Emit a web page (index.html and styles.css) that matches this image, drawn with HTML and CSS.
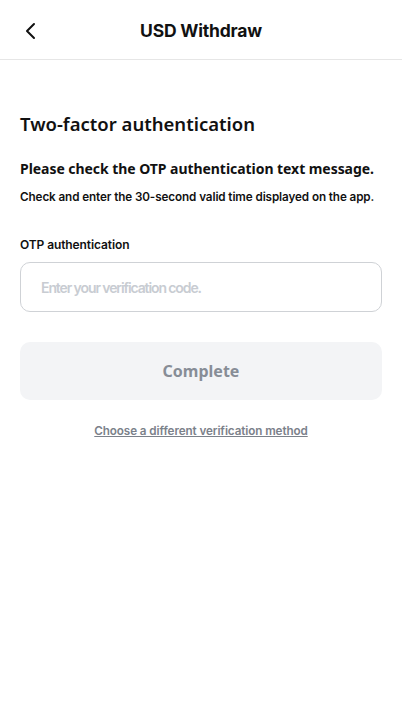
FILE: index.html
```html
<!DOCTYPE html>
<html lang="en">
<head>
<meta charset="utf-8">
<title>USD Withdraw</title>
<link rel="stylesheet" href="styles.css">
</head>
<body>
<header class="topbar">
  <button class="back" aria-label="Back">
    <svg width="14" height="18" viewBox="0 0 14 18"><path d="M10 2 L3 9 L10 16" fill="none" stroke="#111" stroke-width="2" stroke-linecap="round" stroke-linejoin="round"/></svg>
  </button>
  <h1 class="title">USD Withdraw</h1>
</header>
<main class="content">
  <h2 class="heading">Two-factor authentication</h2>
  <p class="lead">Please check the OTP authentication text message.</p>
  <p class="sub">Check and enter the 30-second valid time displayed on the app.</p>
  <label class="label" for="otp">OTP authentication</label>
  <input id="otp" class="input" type="text" placeholder="Enter your verification code.">
  <button class="complete">Complete</button>
  <a class="alt" href="#">Choose a different verification method</a>
</main>
</body>
</html>
```
FILE: styles.css
```css
* { box-sizing: border-box; }
body {
  margin: 0;
  background: #fff;
  font-family: Inter, "Noto Sans", sans-serif;
  color: #111;
}
.topbar {
  height: 60px;
  border-bottom: 1px solid #e6e6e6;
  display: flex;
  align-items: center;
  justify-content: center;
  position: relative;
}
.back {
  position: absolute;
  left: 24px;
  top: 21px;
  background: none;
  border: 0;
  padding: 0;
  width: 16px;
  height: 20px;
  display: flex;
  align-items: center;
}
.title {
  margin: 0;
  font-size: 17.5px;
  font-weight: 700;
  letter-spacing: -0.2px;
  padding-top: 2px;
}
.content {
  padding: 50px 20px 0;
  display: flex;
  flex-direction: column;
}
.heading {
  margin: 0;
  font-family: "Noto Sans", sans-serif;
  font-size: 18.5px;
  font-weight: 600;
  line-height: 28px;
}
.lead {
  margin: 20px 0 0;
  font-family: "Noto Sans", sans-serif;
  font-size: 14px;
  font-weight: 700;
  line-height: 22px;
  white-space: nowrap;
  letter-spacing: -0.05px;
}
.sub {
  margin: 8px 0 0;
  font-size: 11.7px;
  font-weight: 600;
  line-height: 18px;
  letter-spacing: -0.1px;
}
.label {
  margin-top: 30px;
  font-size: 12px;
  font-weight: 600;
  line-height: 18px;
  letter-spacing: -0.1px;
}
.input {
  margin-top: 8px;
  height: 50px;
  width: 100%;
  border: 1px solid #cfd2d6;
  border-radius: 10px;
  padding: 0 20px;
  font-family: Inter, sans-serif;
  font-size: 14px;
  font-weight: 600;
  letter-spacing: -1.1px;
  color: #111;
  outline: none;
}
.input::placeholder { color: #c8ccd2; }
.complete {
  margin-top: 30px;
  height: 58px;
  width: 100%;
  border: 0;
  border-radius: 10px;
  background: #f3f4f6;
  color: #878d96;
  font-family: "Noto Sans", sans-serif;
  font-size: 16px;
  font-weight: 700;
}
.alt {
  margin-top: 24px;
  align-self: center;
  font-size: 11.7px;
  font-weight: 600;
  color: #7b818a;
  text-decoration: underline;
  letter-spacing: -0.1px;
}
```
